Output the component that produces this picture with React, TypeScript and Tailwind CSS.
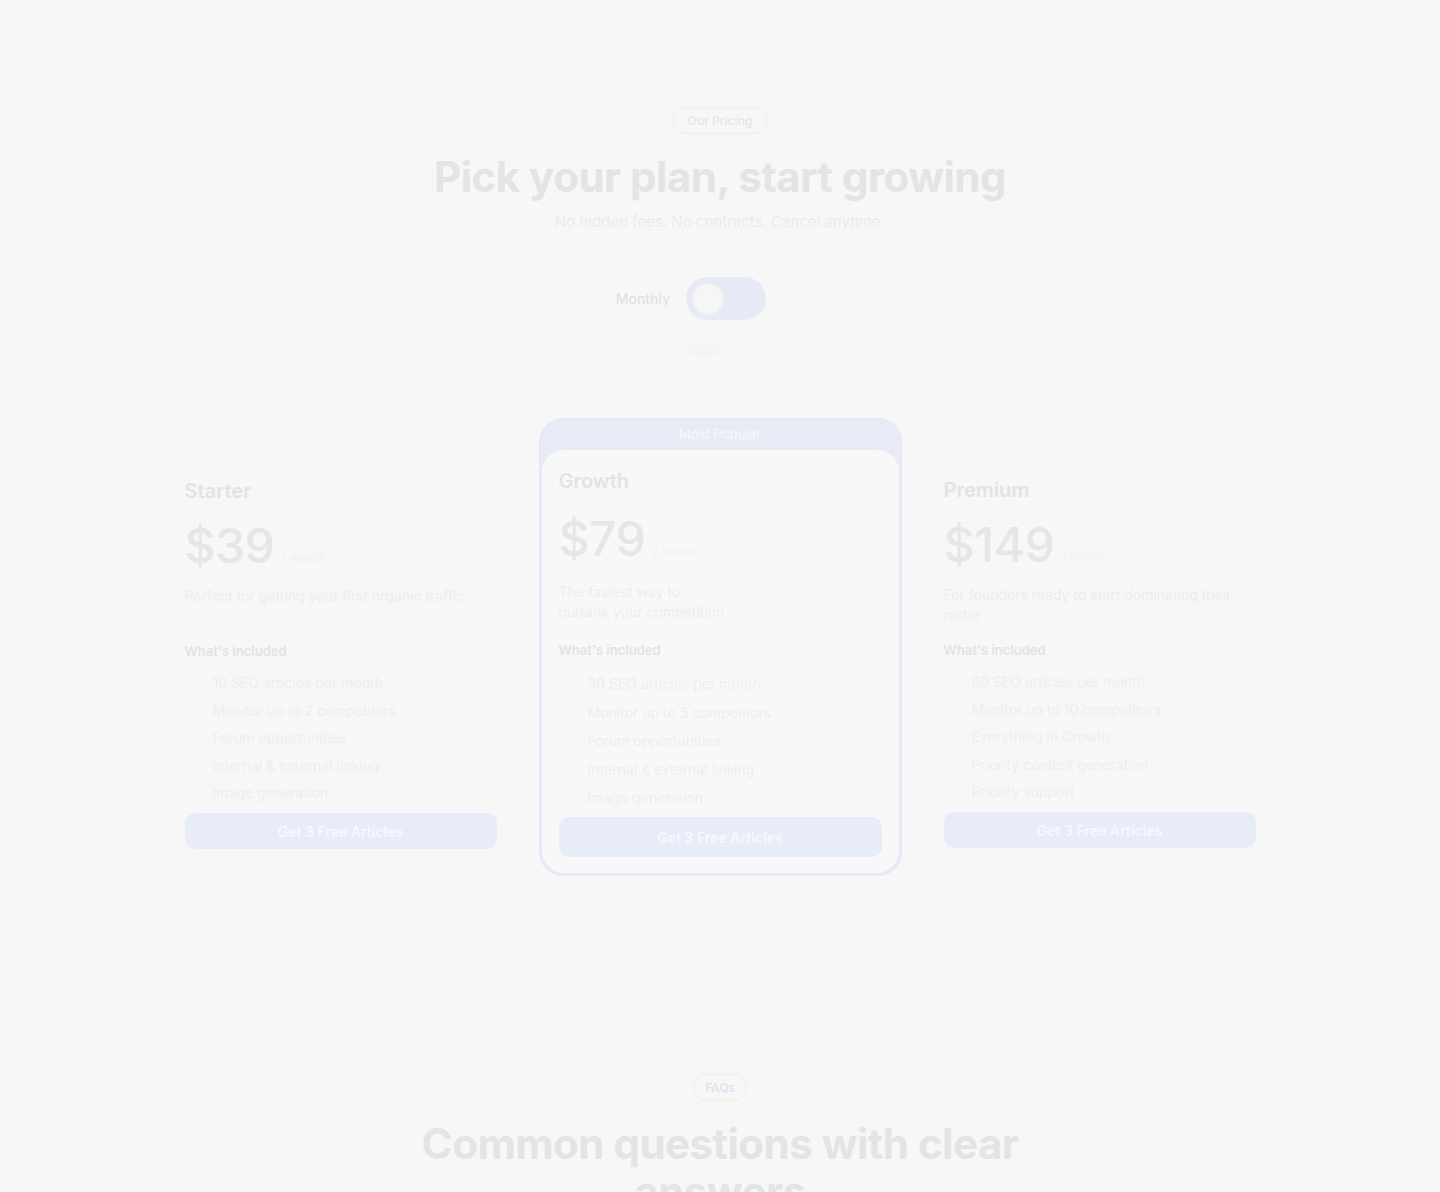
import React from "react";

type Plan = {
  name: string;
  price: string;
  desc: React.ReactNode;
  features: string[];
};

const starter: Plan = {
  name: "Starter",
  price: "$39",
  desc: "Perfect for getting your first organic traffic",
  features: [
    "10 SEO articles per month",
    "Monitor up to 2 competitors",
    "Forum opportunities",
    "Internal & external linking",
    "Image generation",
  ],
};

const growth: Plan = {
  name: "Growth",
  price: "$79",
  desc: (
    <>
      The fastest way to
      <br />
      outrank your competition
    </>
  ),
  features: [
    "30 SEO articles per month",
    "Monitor up to 5 competitors",
    "Forum opportunities",
    "Internal & external linking",
    "Image generation",
  ],
};

const premium: Plan = {
  name: "Premium",
  price: "$149",
  desc: "For founders ready to start dominating their niche",
  features: [
    "60 SEO articles per month",
    "Monitor up to 10 competitors",
    "Everything in Growth",
    "Priority content generation",
    "Priority support",
  ],
};

function Check() {
  return (
    <svg width="16" height="16" viewBox="0 0 24 24" fill="none" stroke="#f5f5f5" strokeWidth="2" strokeLinecap="round" strokeLinejoin="round">
      <path d="M20 6 9 17l-5-5" />
    </svg>
  );
}

function PlanBody({ plan, big }: { plan: Plan; big?: boolean }) {
  return (
    <div className="flex flex-col">
      <div className="text-[20px] leading-[28px] font-semibold text-[#e3e3e3]">{plan.name}</div>
      <div className={`flex items-end gap-2 ${big ? "mt-[20px]" : "mt-[17px]"}`}>
        <span className="text-[48px] leading-[48px] font-medium tracking-[-0.5px] text-[#e6e6e6]">{plan.price}</span>
        <span className="text-[12px] leading-[16px] mb-[4px] text-[#f1f1f1]">/ month</span>
      </div>
      <div className={`min-h-[40px] max-w-[300px] text-[14px] leading-[20px] text-[#ededed] ${big ? "mt-[19px]" : "mt-[16px]"}`}>{plan.desc}</div>
      <div className={`text-[13px] leading-[18px] font-semibold text-[#e3e3e3] ${big ? "mt-[19px]" : "mt-[16px]"}`}>What's included</div>
      <ul className={`flex flex-col ${big ? "mt-[15px] gap-[8.5px]" : "mt-[13px] gap-[7.5px]"}`}>
        {plan.features.map((f) => (
          <li key={f} className={`flex items-center text-[14px] leading-[20px] text-[#eeeeee] ${big ? "gap-[13px]" : "gap-[12px]"}`}>
            <Check />
            <span>{f}</span>
          </li>
        ))}
      </ul>
      <button
        className={`w-full rounded-[10px] bg-[#e8ecf8] text-[14px] font-semibold text-[#f7f8fc] ${big ? "mt-[9px] h-[40px]" : "mt-[10px] h-[36px]"}`}
      >
        Get 3 Free Articles
      </button>
    </div>
  );
}

export default function App() {
  return (
    <div className="min-h-[1192px] w-full bg-[#f7f7f7] overflow-hidden" style={{ fontFamily: "Inter, 'Noto Sans', sans-serif" }}>
      <section className="flex flex-col items-center pt-[107px]">
        <div className="h-[27px] px-[14px] rounded-full border border-[#eeeef0] flex items-center text-[12px] font-medium text-[#e2e5ea]">
          Our Pricing
        </div>
        <h1 className="mt-[19px] text-[42px] leading-[48px] font-bold tracking-[-0.5px] text-[#e4e4e4]">
          Pick your plan, start growing
        </h1>
        <p className="mt-[9px] text-[15px] leading-[24px] text-[#ebebeb]">
          No hidden fees. No contracts. Cancel anytime.
        </p>
        <div className="mt-[43px] flex items-center gap-[16px]">
          <span className="text-[14px] font-medium text-[#e2e2e2]">Monthly</span>
          <div className="w-[80px] h-[43px] rounded-full bg-[#e6eaf6] flex items-center px-[5px]">
            <div className="w-[34px] h-[34px] rounded-full bg-[#f6f6f7] border-2 border-[#e9ecf4]" />
          </div>
          <span className="text-[14px] font-medium text-[#f7f7f7]">Yearly</span>
        </div>
        <div className="mt-[25px] -ml-[32px] h-[10px] w-[32px] bg-[#f4f4f4] rounded-sm" />

        <div className="mt-[63px] flex items-start gap-[42px]">
          <div className="w-[312px] mt-[59px]">
            <PlanBody plan={starter} />
          </div>
          <div className="w-[363px] rounded-[24px] border-2 border-[#e5e9f5] bg-[#e7ebf6]">
            <div className="h-[30px] flex items-center justify-center text-[13px] font-medium text-[#f4f6fb]">
              Most Popular
            </div>
            <div className="mx-[1px] mb-[1px] rounded-[22px] bg-[#f8f8f8] px-[17px] pt-[17px] pb-[16px]">
              <PlanBody plan={growth} big />
            </div>
          </div>
          <div className="w-[312px] mt-[58px]">
            <PlanBody plan={premium} />
          </div>
        </div>
      </section>

      <section className="mt-[99px] flex flex-col items-center pt-[99px]">
        <div className="h-[27px] px-[11px] rounded-full border border-[#eeeef0] flex items-center text-[12px] font-medium text-[#d8e2f0]">
          FAQs
        </div>
        <h2 className="mt-[19px] max-w-[640px] text-center text-[42px] leading-[48px] font-bold tracking-[-0.5px] text-[#e4e4e4]">
          Common questions with clear answers
        </h2>
      </section>
    </div>
  );
}
